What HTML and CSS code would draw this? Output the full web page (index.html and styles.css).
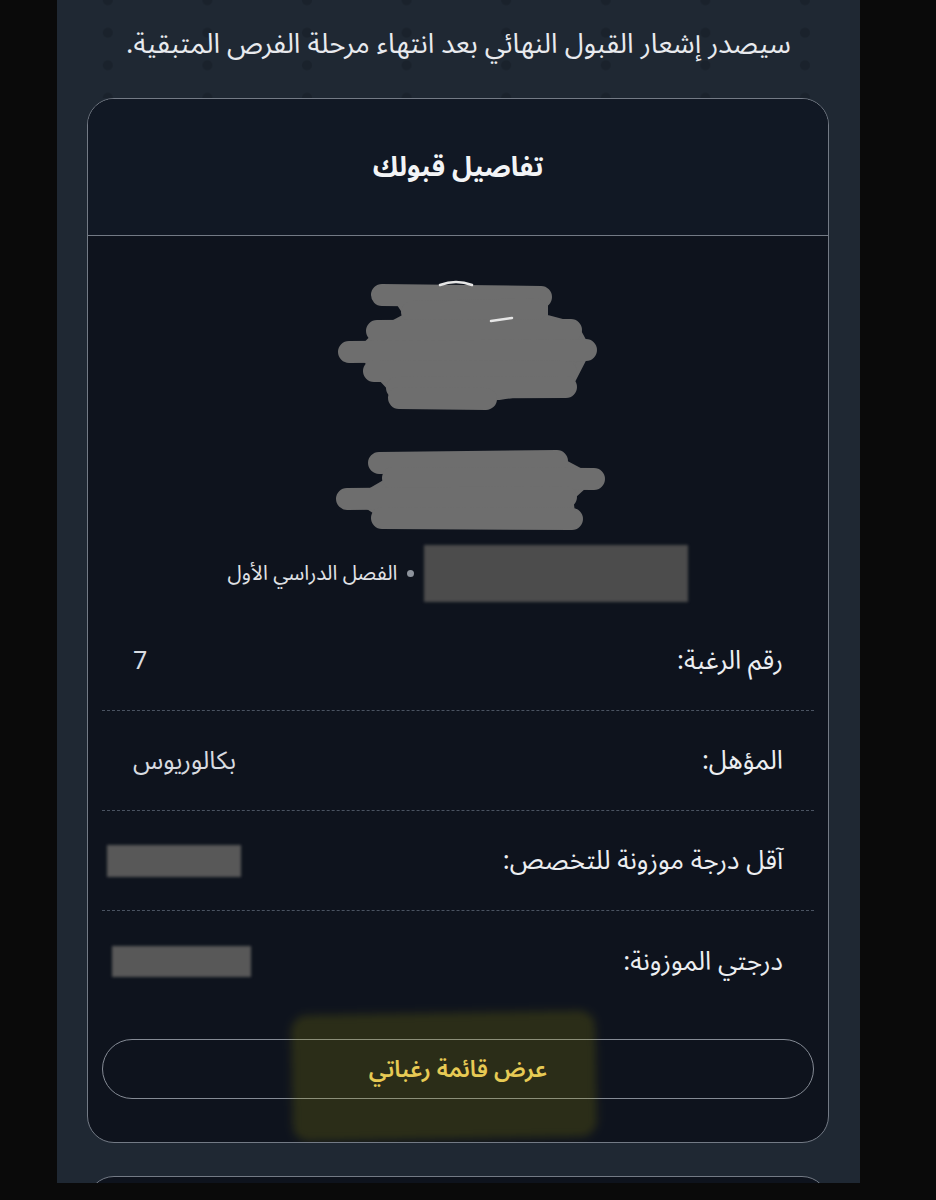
FILE: index.html
```html
<!DOCTYPE html>
<html lang="ar" dir="rtl">
<head>
<meta charset="utf-8">
<title>تفاصيل قبولك</title>
<link rel="stylesheet" href="styles.css">
</head>
<body>
<div class="screen">
  <div class="top">
    <p class="notice">سيصدر إشعار القبول النهائي بعد انتهاء مرحلة الفرص المتبقية.</p>
  </div>
  <section class="card">
    <header class="card-head">
      <h2 class="card-title">تفاصيل قبولك</h2>
    </header>
    <div class="card-body">
      <svg class="scribble" viewBox="89 250 740 290" aria-hidden="true">
        <g class="ink">
          <path class="fill" d="M395 293 L545 294 L545 318 L575 326 L588 350 L570 385 L500 396 L402 398 L378 372 L362 351 L382 331 L410 316 Z"/>
          <path class="fill" d="M385 462 L560 461 L592 478 L570 498 L573 519 L390 519 L360 499 L396 478 Z"/>
          <path d="M383 295 L542 297"/>
          <path d="M413 312 L537 309"/>
          <path d="M378 331 L572 330"/>
          <path d="M350 352 L587 350"/>
          <path d="M375 371 L567 372"/>
          <path d="M398 388 L567 387"/>
          <path d="M400 398 L487 399"/>
          <path d="M380 463 L558 461"/>
          <path d="M394 478 L595 479"/>
          <path d="M348 499 L567 497"/>
          <path d="M383 518 L573 519"/>
        </g>
        <path class="glint" d="M441 285 Q457 279 473 285"/>
        <path class="glint" d="M492 321 L513 318"/>
      </svg>
      <div class="term">
        <span class="redact redact-term"></span>
        <span class="dot"></span>
        <span class="term-text">الفصل الدراسي الأول</span>
      </div>
      <div class="rows">
        <div class="row">
          <span class="label">رقم الرغبة:</span>
          <span class="value">7</span>
        </div>
        <div class="row">
          <span class="label">المؤهل:</span>
          <span class="value">بكالوريوس</span>
        </div>
        <div class="row">
          <span class="label">آقل درجة موزونة للتخصص:</span>
          <span class="redact redact-min"></span>
        </div>
        <div class="row">
          <span class="label">درجتي الموزونة:</span>
          <span class="redact redact-mine"></span>
        </div>
      </div>
      <div class="btn-wrap">
        <button class="btn" type="button">عرض قائمة رغباتي</button>
        <span class="highlight"></span>
      </div>
    </div>
  </section>
  <section class="card card-next"></section>
</div>
</body>
</html>
```

FILE: styles.css
```css
* { box-sizing: border-box; }

html, body {
  margin: 0;
  padding: 0;
  background: #0a0a0a;
}

body {
  font-family: "Noto Sans Arabic", "Noto Kufi Arabic", "DejaVu Sans", sans-serif;
  color: #e5e7eb;
}

.screen {
  width: 803px;
  height: 1183px;
  margin-left: 57px;
  margin-right: auto;
  background: #1f2833;
  overflow: hidden;
}

.top {
  height: 98px;
  padding-top: 23px;
  background-image: radial-gradient(circle, #1a222c 0, #1a222c 4.5px, rgba(26,34,44,0) 5.5px);
  background-size: 99.6px 32.5px;
  background-position: 1px -16px;
}

.notice {
  margin: 0;
  text-align: center;
  font-size: 27.5px;
  line-height: 42px;
  color: #e8eaee;
}

.card {
  margin: 0 31px 0 30px;
  background: #0e131d;
  border: 1.5px solid #737a85;
  border-radius: 27px;
  overflow: hidden;
}

.card-head {
  height: 137px;
  background: #111824;
  border-bottom: 1.5px solid #737a85;
  display: flex;
  align-items: center;
  justify-content: center;
}

.card-title {
  margin: 0;
  font-size: 27px;
  font-weight: 700;
  color: #f3f4f6;
}

.card-body {
  padding: 0 14px 43px;
}

.scribble {
  display: block;
  width: 740px;
  height: 290px;
  margin: 0 -14px;
  margin-top: 14px;
}

.ink path {
  fill: none;
  stroke: #6e6e6e;
  stroke-width: 22;
  stroke-linecap: round;
  stroke-linejoin: round;
}

.ink .fill {
  fill: #6e6e6e;
  stroke-width: 8;
}

.glint {
  fill: none;
  stroke: #e6e6e6;
  stroke-width: 2.5;
  stroke-linecap: round;
}

.term {
  display: flex;
  align-items: center;
  justify-content: center;
  gap: 10px;
  height: 57px;
  margin-top: 5px;
}

.term-text {
  font-size: 20.5px;
  color: #e0e2e6;
}

.dot {
  width: 7px;
  height: 7px;
  border-radius: 50%;
  background: #8d939c;
}

.redact {
  display: block;
  background: #4c4c4c;
  filter: blur(1.5px);
}

.redact-term {
  width: 264px;
  height: 57px;
}

.redact-min {
  width: 134px;
  height: 32px;
  background: #585858;
  margin-left: -26px;
}

.redact-mine {
  width: 139px;
  height: 31px;
  background: #585858;
  margin-left: -21px;
}

.rows {
  margin-top: 9px;
}

.row {
  display: flex;
  align-items: center;
  justify-content: space-between;
  height: 100px;
  padding: 0 31px;
  border-bottom: 1.5px dashed #4a5361;
}

.row:last-child {
  border-bottom: none;
}

.label {
  font-size: 26px;
  color: #eceef1;
}

.value {
  font-size: 25px;
  color: #d8dbe0;
}

.btn-wrap {
  position: relative;
  margin-top: 28px;
}

.btn {
  display: block;
  width: 100%;
  height: 60px;
  border: 1.5px solid #858b95;
  border-radius: 30px;
  background: transparent;
  font-family: inherit;
  font-size: 23px;
  font-weight: 600;
  color: #f5d468;
}

.highlight {
  position: absolute;
  left: 190px;
  top: -26px;
  width: 304px;
  height: 126px;
  background: rgba(170, 158, 0, 0.19);
  border-radius: 16px;
  filter: blur(4px);
  transform: rotate(-1deg);
  pointer-events: none;
}

.card-next {
  height: 80px;
  margin-top: 33px;
}
```
